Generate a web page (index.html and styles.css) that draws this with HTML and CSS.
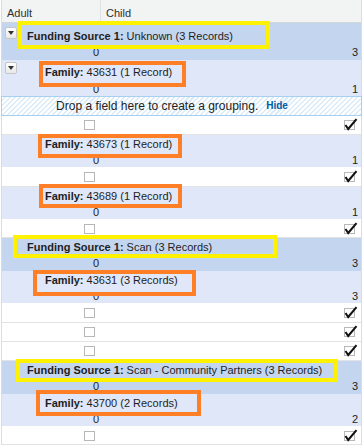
FILE: index.html
```html
<!DOCTYPE html>
<html lang="en">
<head>
<meta charset="utf-8">
<title>Report</title>
<link rel="stylesheet" href="styles.css">
</head>
<body>
<div class="report">
  <div class="head">
    <div class="hc hc-adult">Adult</div>
    <div class="hc">Child</div>
  </div>

  <div class="sub g open-g">
    <div class="lbl-line">
      <span class="toggle"><svg width="6" height="4" viewBox="0 0 6 4"><polygon points="0,0 6,0 3,4" fill="#333"/></svg></span>
      <span class="lbl hl-y hl-y1"><b>Funding Source 1:</b> Unknown (3 Records)</span>
    </div>
    <div class="nums"><span>0</span><span>3</span></div>
  </div>

  <div class="sub f open-f">
    <div class="lbl-line">
      <span class="toggle"><svg width="6" height="4" viewBox="0 0 6 4"><polygon points="0,0 6,0 3,4" fill="#333"/></svg></span>
      <span class="lbl hl-o hl-o1"><b>Family:</b> 43631 (1 Record)</span>
    </div>
    <div class="nums"><span>0</span><span>1</span></div>
  </div>

  <div class="drop">Drop a field here to create a grouping.<a href="#">Hide</a></div>

  <div class="det">
    <svg class="cb" width="12" height="13" viewBox="0 0 12 13"><rect x="0.5" y="2.5" width="10" height="9" fill="none" stroke="#6e6e6e" stroke-dasharray="1 1"/></svg>
    <svg class="cb" width="14" height="13" viewBox="0 0 14 13"><rect x="0.5" y="2.5" width="10" height="9" fill="none" stroke="#6e6e6e" stroke-dasharray="1 1"/><path d="M1.5 7 L4.2 11 L12.5 1.2" fill="none" stroke="#111" stroke-width="2"/></svg>
  </div>

  <div class="sub f">
    <div class="lbl-line">
      <span class="lbl hl-o hl-o2"><b>Family:</b> 43673 (1 Record)</span>
    </div>
    <div class="nums"><span>0</span><span>1</span></div>
  </div>

  <div class="det">
    <svg class="cb" width="12" height="13" viewBox="0 0 12 13"><rect x="0.5" y="2.5" width="10" height="9" fill="none" stroke="#6e6e6e" stroke-dasharray="1 1"/></svg>
    <svg class="cb" width="14" height="13" viewBox="0 0 14 13"><rect x="0.5" y="2.5" width="10" height="9" fill="none" stroke="#6e6e6e" stroke-dasharray="1 1"/><path d="M1.5 7 L4.2 11 L12.5 1.2" fill="none" stroke="#111" stroke-width="2"/></svg>
  </div>

  <div class="sub f">
    <div class="lbl-line">
      <span class="lbl hl-o hl-o3"><b>Family:</b> 43689 (1 Record)</span>
    </div>
    <div class="nums"><span>0</span><span>1</span></div>
  </div>

  <div class="det">
    <svg class="cb" width="12" height="13" viewBox="0 0 12 13"><rect x="0.5" y="2.5" width="10" height="9" fill="none" stroke="#6e6e6e" stroke-dasharray="1 1"/></svg>
    <svg class="cb" width="14" height="13" viewBox="0 0 14 13"><rect x="0.5" y="2.5" width="10" height="9" fill="none" stroke="#6e6e6e" stroke-dasharray="1 1"/><path d="M1.5 7 L4.2 11 L12.5 1.2" fill="none" stroke="#111" stroke-width="2"/></svg>
  </div>

  <div class="sub g">
    <div class="lbl-line">
      <span class="lbl hl-y hl-y2"><b>Funding Source 1:</b> Scan (3 Records)</span>
    </div>
    <div class="nums"><span>0</span><span>3</span></div>
  </div>

  <div class="sub f">
    <div class="lbl-line">
      <span class="lbl hl-o hl-o4"><b>Family:</b> 43631 (3 Records)</span>
    </div>
    <div class="nums"><span>0</span><span>3</span></div>
  </div>

  <div class="det">
    <svg class="cb" width="12" height="13" viewBox="0 0 12 13"><rect x="0.5" y="2.5" width="10" height="9" fill="none" stroke="#6e6e6e" stroke-dasharray="1 1"/></svg>
    <svg class="cb" width="14" height="13" viewBox="0 0 14 13"><rect x="0.5" y="2.5" width="10" height="9" fill="none" stroke="#6e6e6e" stroke-dasharray="1 1"/><path d="M1.5 7 L4.2 11 L12.5 1.2" fill="none" stroke="#111" stroke-width="2"/></svg>
  </div>
  <div class="det">
    <svg class="cb" width="12" height="13" viewBox="0 0 12 13"><rect x="0.5" y="2.5" width="10" height="9" fill="none" stroke="#6e6e6e" stroke-dasharray="1 1"/></svg>
    <svg class="cb" width="14" height="13" viewBox="0 0 14 13"><rect x="0.5" y="2.5" width="10" height="9" fill="none" stroke="#6e6e6e" stroke-dasharray="1 1"/><path d="M1.5 7 L4.2 11 L12.5 1.2" fill="none" stroke="#111" stroke-width="2"/></svg>
  </div>
  <div class="det">
    <svg class="cb" width="12" height="13" viewBox="0 0 12 13"><rect x="0.5" y="2.5" width="10" height="9" fill="none" stroke="#6e6e6e" stroke-dasharray="1 1"/></svg>
    <svg class="cb" width="14" height="13" viewBox="0 0 14 13"><rect x="0.5" y="2.5" width="10" height="9" fill="none" stroke="#6e6e6e" stroke-dasharray="1 1"/><path d="M1.5 7 L4.2 11 L12.5 1.2" fill="none" stroke="#111" stroke-width="2"/></svg>
  </div>

  <div class="sub g">
    <div class="lbl-line">
      <span class="lbl hl-y hl-y3"><b>Funding Source 1:</b> Scan - Community Partners (3 Records)</span>
    </div>
    <div class="nums"><span>0</span><span>3</span></div>
  </div>

  <div class="sub f">
    <div class="lbl-line">
      <span class="lbl hl-o hl-o5"><b>Family:</b> 43700 (2 Records)</span>
    </div>
    <div class="nums"><span>0</span><span>2</span></div>
  </div>

  <div class="det">
    <svg class="cb" width="12" height="13" viewBox="0 0 12 13"><rect x="0.5" y="2.5" width="10" height="9" fill="none" stroke="#6e6e6e" stroke-dasharray="1 1"/></svg>
    <svg class="cb" width="14" height="13" viewBox="0 0 14 13"><rect x="0.5" y="2.5" width="10" height="9" fill="none" stroke="#6e6e6e" stroke-dasharray="1 1"/><path d="M1.5 7 L4.2 11 L12.5 1.2" fill="none" stroke="#111" stroke-width="2"/></svg>
  </div>
</div>
</body>
</html>
```

FILE: styles.css
```css
html, body {
  margin: 0;
  padding: 0;
  background: #fff;
}

body {
  font-family: "Liberation Sans", Arial, sans-serif;
  font-size: 11px;
  line-height: 14px;
  color: #1e1e1e;
}

.report {
  margin-left: 1px;
  width: 359px;
  border-left: 1px solid #dcdcdc;
  border-right: 1px solid #dcdcdc;
}

/* header */
.head {
  display: grid;
  grid-template-columns: 99px 1fr;
  height: 23px;
  box-sizing: border-box;
  background: #f2f3f3;
  border-bottom: 1px solid #d4d7d8;
  color: #2f2f2f;
}

.hc {
  padding: 6px 0 2px 5px;
}

.hc-adult {
  border-right: 1px solid #dfe2e3;
}

/* summary rows */
.sub {
  height: 32.5px;
  box-sizing: border-box;
  padding-top: 2px;
}

.sub.g { background: #c4d5ef; }
.sub.f { background: #dfe7f8; }

.sub.open-g { height: 37px; padding-top: 6px; }
.sub.open-f { height: 36px; padding-top: 5px; }

.lbl-line {
  display: grid;
  grid-template-columns: 25px auto;
  justify-content: start;
  height: 14px;
}

.f .lbl-line { grid-template-columns: 43px auto; }

.toggle {
  grid-column: 1;
  align-self: start;
  margin: -2px 0 0 3px;
  width: 12px;
  height: 12px;
  box-sizing: border-box;
  border: 1px solid #c6c6c6;
  border-radius: 2px;
  background: linear-gradient(#ffffff, #e8e8e8);
  display: flex;
  align-items: center;
  justify-content: center;
}

.open-f .toggle { margin-top: -3px; }

.toggle svg { display: block; }

.lbl {
  grid-column: 2;
  position: relative;
  white-space: nowrap;
}

.lbl b { font-weight: bold; }

/* hand-drawn annotation boxes */
.lbl::after {
  content: "";
  position: absolute;
  border: 4px solid transparent;
  z-index: 2;
  pointer-events: none;
}

.hl-y::after { border-color: #fff200; }
.hl-o::after { border-color: #ff7f27; }

.hl-y1::after { top: -8px; bottom: -6px; left: -9px; right: -37px; }
.hl-y2::after { top: -5px; bottom: -4px; left: -14px; right: -65px; }
.hl-y3::after { top: -4px; bottom: -5px; left: -11px; right: -16px; }
.hl-o1::after { top: -4px; bottom: -8px; left: -6px; right: -14px; }
.hl-o2::after { top: -3px; bottom: -7px; left: -7px; right: -10px; }
.hl-o3::after { top: -5px; bottom: -5px; left: -6px; right: -10px; }
.hl-o4::after { top: -3px; bottom: -9px; left: -12px; right: -18px; }
.hl-o5::after { top: -6px; bottom: -6px; left: -9px; right: -23px; }

.nums {
  display: grid;
  grid-template-columns: 99px 1fr;
  margin-top: 2px;
  text-align: right;
}

.open-f .nums { margin-top: 3px; }

.nums span:first-child { padding-right: 2px; }
.nums span:last-child { padding-right: 3px; }

/* drop zone */
.drop {
  margin: 0 -1px;
  height: 19.5px;
  box-sizing: border-box;
  border: 1px solid #a6cff0;
  background: repeating-linear-gradient(135deg, #ffffff 0 2px, #dcecf8 2px 3.5px);
  display: flex;
  align-items: center;
  justify-content: center;
  padding-right: 19px;
  font-size: 12px;
  color: #222;
}

.drop a {
  margin-left: 8px;
  font-size: 10px;
  font-weight: bold;
  color: #015ba7;
  text-decoration: none;
}

/* detail rows */
.det {
  display: grid;
  grid-template-columns: 99px 1fr;
  height: 19.25px;
  box-sizing: border-box;
  border-bottom: 1px solid #e3e3e3;
  align-items: center;
  justify-items: end;
}

.cb { display: block; }
.det .cb:first-child { margin-right: 5px; }
.det .cb:last-child { margin-right: 3px; }
```
